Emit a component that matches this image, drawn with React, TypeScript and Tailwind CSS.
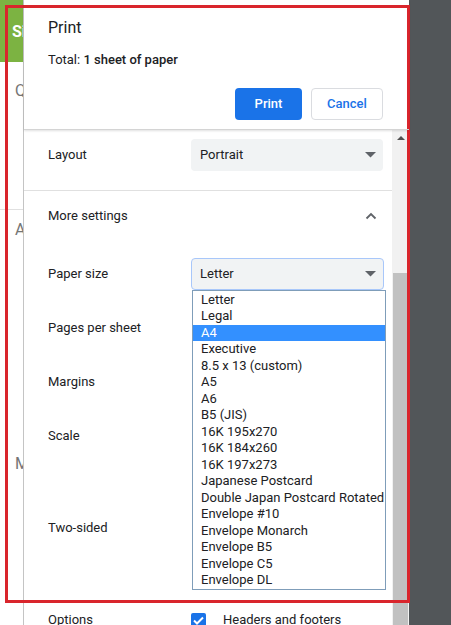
const paperSizes = [
  'Letter',
  'Legal',
  'A4',
  'Executive',
  '8.5 x 13 (custom)',
  'A5',
  'A6',
  'B5 (JIS)',
  '16K 195x270',
  '16K 184x260',
  '16K 197x273',
  'Japanese Postcard',
  'Double Japan Postcard Rotated',
  'Envelope #10',
  'Envelope Monarch',
  'Envelope B5',
  'Envelope C5',
  'Envelope DL',
];

function Caret() {
  return (
    <svg width="11" height="6" viewBox="0 0 11 6">
      <path d="M0 0 L11 0 L5.5 5.5 Z" fill="#5f6368" />
    </svg>
  );
}

function Select({ value, focused }: { value: string; focused?: boolean }) {
  return (
    <div
      className={
        focused
          ? 'flex h-8 w-[193px] items-center justify-between rounded border border-[#a8c7fa] bg-[#f1f3f4] pl-[8px] pr-[7px]'
          : 'flex h-8 w-[192px] items-center justify-between rounded bg-[#f1f3f4] pl-[9px] pr-[7px]'
      }
    >
      <span className="text-[13px] text-[#202124]">{value}</span>
      <Caret />
    </div>
  );
}

function Row({ label, tall, children }: { label: string; tall?: boolean; children?: React.ReactNode }) {
  return (
    <div className={tall ? 'h-[92px]' : 'h-[54px]'}>
      <div className="flex h-[54px] items-center pl-6">
        <div className="w-[143px] text-[13px] text-[#202124]">{label}</div>
        {children}
      </div>
    </div>
  );
}

export default function App() {
  return (
    <div className="relative flex h-[625px] w-[451px] overflow-hidden bg-white font-['Roboto',sans-serif]">
      {/* page behind the dialog */}
      <div className="flex w-[23px] flex-col overflow-hidden whitespace-nowrap text-[16px] text-[#757575]">
        <div className="h-[62px] shrink-0 bg-[#7cb342] pl-[12px] pt-[20px] font-bold text-white">Sign</div>
        <div className="mt-[19px] pl-[15px] leading-5">Q</div>
        <div className="mt-[108px] border-t border-[#e0e0e0]" />
        <div className="mt-[10px] pl-[15px] leading-5">A</div>
        <div className="mt-[214px] pl-[15px] leading-5">M</div>
      </div>

      {/* print dialog */}
      <div className="flex w-[386px] flex-col border-l border-[#c4c4c4] bg-white">
        <div className="relative z-10 h-[130px] shrink-0 border-b border-[#d4d4d4] pl-6 pr-[26px] pt-[18px] shadow-[0_1px_2px_rgba(0,0,0,0.12)]">
          <div className="text-[16px] leading-5 text-[#202124]">Print</div>
          <div className="mt-[14px] text-[13px] leading-4 text-[#202124]">
            Total: <span className="font-medium">1 sheet of paper</span>
          </div>
          <div className="mt-[20px] flex justify-end gap-[9px]">
            <button className="h-8 w-[67px] rounded bg-[#1a73e8] text-[13px] font-medium text-white">Print</button>
            <button className="h-8 w-[72px] rounded border border-[#dadce0] bg-white text-[13px] font-medium text-[#1a73e8]">
              Cancel
            </button>
          </div>
        </div>

        <div className="flex min-h-0 flex-1">
          <div className="w-[368px]">
            <div className="flex items-center border-b border-[#e0e0e0] pb-[19px] pl-6 pt-[9px]">
              <div className="w-[143px] text-[13px] text-[#202124]">Layout</div>
              <Select value="Portrait" />
            </div>
            <div className="flex h-[49px] items-center justify-between pl-6 pr-[15px]">
              <div className="text-[13px] text-[#202124]">More settings</div>
              <svg width="12" height="8" viewBox="0 0 12 8">
                <path d="M1.5 6.5 L6 2 L10.5 6.5" fill="none" stroke="#5f6368" strokeWidth="1.8" />
              </svg>
            </div>
            <div className="h-[7px]" />
            <Row label="Paper size">
              <Select value="Letter" focused />
            </Row>
            <Row label="Pages per sheet" />
            <Row label="Margins" />
            <Row label="Scale" tall />
            <Row label="Two-sided" tall />
            <Row label="Options">
              <div className="flex items-center gap-[17px]">
                <div className="flex h-[15px] w-[15px] items-center justify-center rounded-[2px] bg-[#1a73e8]">
                  <svg width="11" height="9" viewBox="0 0 11 9">
                    <path d="M1 4.5 L4 7.5 L10 1.5" fill="none" stroke="white" strokeWidth="2" />
                  </svg>
                </div>
                <span className="text-[13px] text-[#202124]">Headers and footers</span>
              </div>
            </Row>
          </div>

          <div className="flex w-[17px] flex-col bg-[#f1f1f1]">
            <div className="flex h-[17px] shrink-0 items-center justify-center pb-[2px]">
              <svg width="8" height="4" viewBox="0 0 8 4">
                <path d="M0 4 L4 0 L8 4 Z" fill="#505050" />
              </svg>
            </div>
            <div className="h-[126px] shrink-0" />
            <div className="mx-[1px] flex-1 bg-[#c1c1c1]" />
          </div>
        </div>
      </div>

      <div className="flex-1 bg-[#525659]" />

      {/* open paper size list */}
      <div className="absolute left-[192px] top-[290px] w-[194px] border border-[#7f9db9] bg-white py-[0.5px]">
        {paperSizes.map((size) => (
          <div
            key={size}
            className={
              size === 'A4'
                ? 'h-[16.5px] whitespace-nowrap bg-[#3390ff] pl-2 text-[13px] leading-[16.5px] text-white'
                : 'h-[16.5px] whitespace-nowrap pl-2 text-[13px] leading-[16.5px] text-[#202124]'
            }
          >
            {size}
          </div>
        ))}
      </div>

      {/* highlight frame */}
      <div className="pointer-events-none absolute left-[5px] top-[5px] h-[598px] w-[405px] border-[3px] border-[#d9252c]" />
    </div>
  );
}
